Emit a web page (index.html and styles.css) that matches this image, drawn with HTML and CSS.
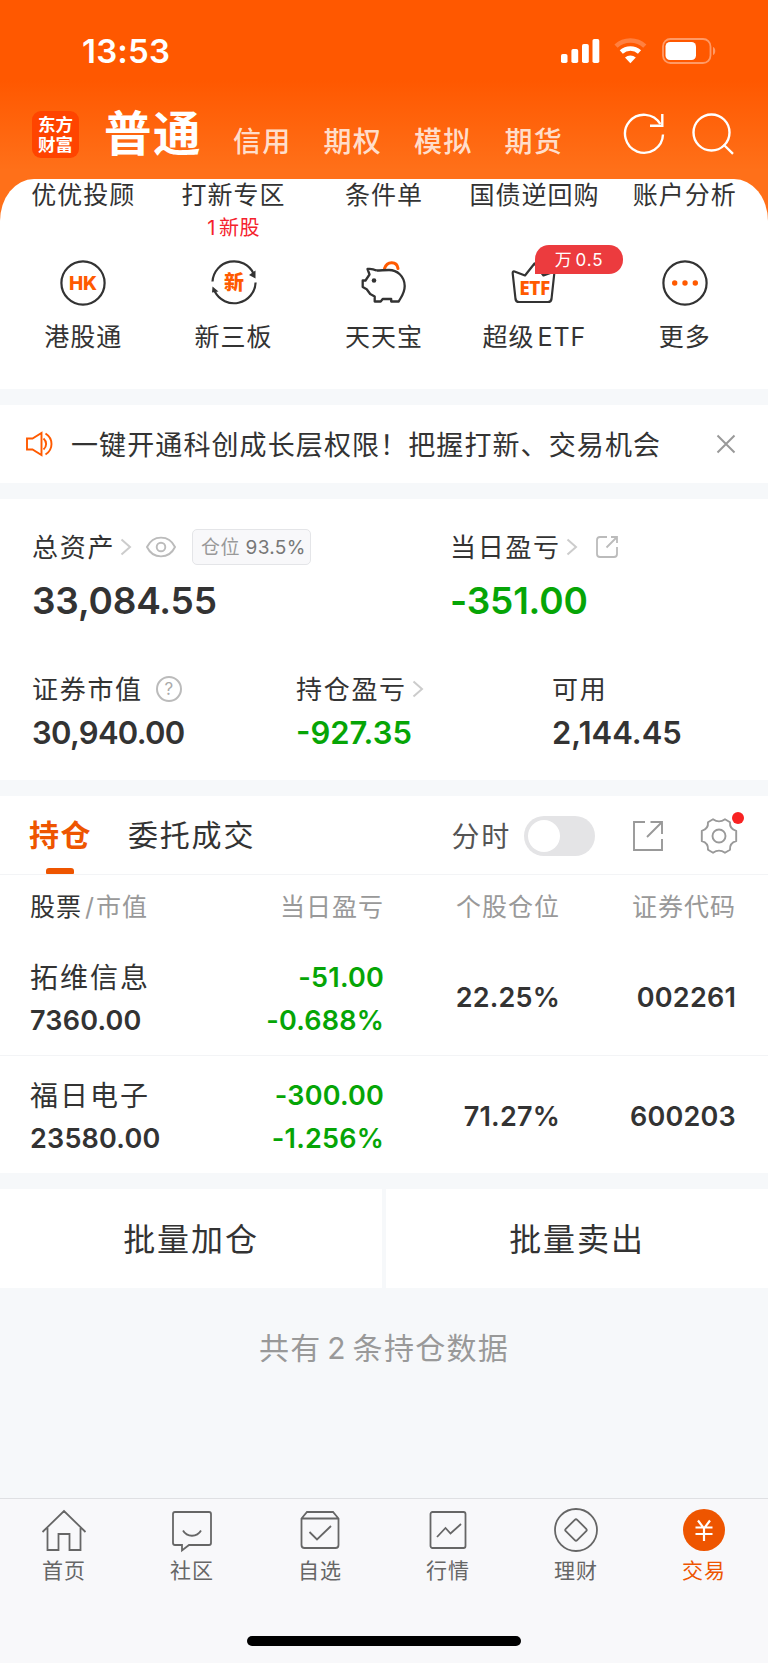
FILE: index.html
```html
<!DOCTYPE html>
<html lang="zh-CN">
  <head>
    <meta charset="UTF-8" />
    <meta name="viewport" content="width=device-width, initial-scale=1.0" />
    <title>交易</title>
    <link rel="stylesheet" href="styles.css">
  </head>
  <body>
    <header>
      <div class="status">
        <span class="time">13:53</span>
        <svg class="signals" width="156" height="28" viewBox="0 0 156 28">
          <g fill="#fff">
            <rect x="0" y="17" width="6.5" height="9" rx="1.8" />
            <rect x="10.4" y="12" width="6.8" height="14" rx="1.8" />
            <rect x="21" y="7" width="6.8" height="19" rx="1.8" />
            <rect x="31.5" y="2" width="6.8" height="24" rx="1.8" />
          </g>
          <g fill="none" stroke="#fff" stroke-width="4.6">
            <path d="M55 9.2A21 21 0 0 1 83.800 9.200" stroke="#ff8040" />
            <path d="M60.300 15A13.500 13.500 0 0 1 78.500 15" />
          </g>
          <path d="M64 20.500a8 8 0 0 1 10.800 0l-5.400 5.700z" fill="#fff" />
          <rect x="102" y="2" width="47.500" height="24" rx="7.500" fill="none" stroke="#ff9a66" stroke-width="1.800" />
          <rect x="104.500" y="5" width="30.500" height="18" rx="4.500" fill="#fff" />
          <path d="M152 10c3 1 3 7 0 8z" fill="#ff9a66" />
        </svg>
      </div>
      <nav class="top-nav">
        <div class="logo">东方<br />财富</div>
        <h1>普通</h1>
        <a>信用</a>
        <a>期权</a>
        <a>模拟</a>
        <a>期货</a>
        <svg class="refresh" width="44" height="44" viewBox="0 0 44 44" fill="none" stroke="#fff" stroke-width="2.400">
          <path d="M41 22.500A19 19 0 1 1 38.300 12" />
          <path d="M40.300 2v11.800H28" />
        </svg>
        <svg class="search" width="44" height="44" viewBox="0 0 44 44" fill="none" stroke="#fff" stroke-width="2.400">
          <circle cx="20.500" cy="20.500" r="18" />
          <path d="M32.500 32.500l9.500 9.300" />
        </svg>
      </nav>
    </header>

    <section class="quick">
      <div class="quick-row">
        <span>优优投顾</span>
        <span>打新专区<em>1 新股</em></span>
        <span>条件单</span>
        <span>国债逆回购</span>
        <span>账户分析</span>
      </div>
      <div class="quick-row icons">
        <div class="item">
          <svg width="50" height="50" viewBox="0 0 50 50">
            <circle cx="25" cy="25" r="21.600" fill="none" stroke="#333" stroke-width="2.200" />
            <text x="25" y="32" class="icon-hk">HK</text>
          </svg>
          港股通
        </div>
        <div class="item">
          <svg width="50" height="50" viewBox="0 0 50 50">
            <g fill="none" stroke="#333" stroke-width="2.200">
              <path d="M3.500 23.500A21.600 21.600 0 0 1 44.500 15.500" />
              <path d="M46.600 24.500A21.600 21.600 0 0 1 5.800 33.500" />
            </g>
            <path d="M46.500 12.500v8l-6.500-3.500zM3.500 28.500l6 5-6.500 1z" fill="#333" />
            <text x="25" y="32" class="icon-xin">新</text>
          </svg>
          新三板
        </div>
        <div class="item">
          <svg width="50" height="50" viewBox="0 0 50 50" fill="none" stroke-width="2.300" stroke-linejoin="round">
            <path d="M25.500 10.500c2.500-8 12.500-7.500 13.500 0" stroke="#ff5a00" stroke-width="3" stroke-linecap="round" />
            <path d="M17.500 12.500c-3-1.500-7-1.800-9-1.500l2 5.500-4 6H3.700v6.500l4 2.200 3.500 4.800 4.500 2.500v5h6l2-2.500h8.500v2.500h7.500c2-4 6-8 6-15.500C45.500 18 38 12 30 12c-5 0-8 .5-12.500.5" stroke="#333" />
            <circle cx="15" cy="22.500" r="2.300" fill="#333" />
          </svg>
          天天宝
        </div>
        <div class="item">
          <svg width="50" height="50" viewBox="0 0 50 50">
            <path d="M5.500 13.500l10.500 4 9.500-12 9 12 11-4-3 27.500c-.3 2-1.500 3-3.500 3h-29c-2 0-3.200-1-3.500-3l-2.800-25.500c-.1-1.500.5-2.500 1.800-2z" fill="none" stroke="#333" stroke-width="2.200" stroke-linejoin="round" />
            <text x="25.500" y="36.500" class="icon-etf">ETF</text>
          </svg>
          超级 ETF
          <b class="badge">万 0.5</b>
        </div>
        <div class="item">
          <svg width="50" height="50" viewBox="0 0 50 50">
            <circle cx="25" cy="25" r="21.600" fill="none" stroke="#333" stroke-width="2.200" />
            <g fill="#ff5a00">
              <circle cx="14.700" cy="25" r="2.700" />
              <circle cx="25" cy="25" r="2.700" />
              <circle cx="35.300" cy="25" r="2.700" />
            </g>
          </svg>
          更多
        </div>
      </div>
    </section>

    <section class="notice">
      <svg width="30" height="26" viewBox="0 0 30 26" fill="none" stroke="#ff5a00" stroke-width="1.900">
        <path d="M2 7.500h5.500L16.500 2v22l-9-5.500H2z" />
        <path d="M18.500 7.500c3.500 3 3.500 8 0 11" />
        <path d="M20.500 2.500c8 5 8 16 0 21" />
      </svg>
      <p>一键开通科创成长层权限！把握打新、交易机会</p>
      <svg class="close" width="20" height="20" viewBox="0 0 20 20" fill="none" stroke="#999" stroke-width="2">
        <path d="M1.500 1.500l17 17M18.500 1.500l-17 17" />
      </svg>
    </section>

    <section class="assets">
      <div class="main-row">
        <div class="col">
          <div class="label">
            <span>总资产</span>
            <svg class="arrow" width="12" height="18" viewBox="0 0 12 18"><path d="M1.500 1.500L10 9l-8.500 7.500" /></svg>
            <svg class="eye" width="32" height="22" viewBox="0 0 32 22" fill="none" stroke="#bbb" stroke-width="1.900">
              <path d="M2 11C8 -1.500 24 -1.500 30 11 24 23.500 8 23.500 2 11z" />
              <circle cx="16" cy="11" r="4.300" />
            </svg>
            <b class="tag">仓位 <i>93.5%</i></b>
          </div>
          <strong>33,084.55</strong>
        </div>
        <div class="col">
          <div class="label">
            <span>当日盈亏</span>
            <svg class="arrow" width="12" height="18" viewBox="0 0 12 18"><path d="M1.500 1.500L10 9l-8.500 7.500" /></svg>
            <svg class="share" width="24" height="24" viewBox="0 0 24 24" fill="none" stroke="#bbb" stroke-width="1.800">
              <path d="M12 2H5Q2 2 2 5v14q0 3 3 3h14q3 0 3-3v-7" />
              <path d="M16 2h6v6M22 2L11.500 12.500" />
            </svg>
          </div>
          <strong class="down">-351.00</strong>
        </div>
      </div>
      <div class="sub-row">
        <div class="col">
          <div class="label">
            <span>证券市值</span>
            <b class="help">?</b>
          </div>
          <strong>30,940.00</strong>
        </div>
        <div class="col">
          <div class="label">
            <span>持仓盈亏</span>
            <svg class="arrow" width="12" height="18" viewBox="0 0 12 18"><path d="M1.500 1.500L10 9l-8.500 7.500" /></svg>
          </div>
          <strong class="down">-927.35</strong>
        </div>
        <div class="col">
          <div class="label"><span>可用</span></div>
          <strong>2,144.45</strong>
        </div>
      </div>
    </section>

    <section class="hold">
      <div class="tabs">
        <a class="active">持仓</a>
        <a>委托成交</a>
        <span class="mode">分时</span>
        <span class="switch"></span>
        <svg class="export" width="32" height="32" viewBox="0 0 32 32" fill="none" stroke="#999" stroke-width="1.900">
          <path d="M13 2H2v28h28V19" />
          <path d="M18.500 2H30v12M30 2L15 17" />
        </svg>
        <span class="gear">
          <svg width="38" height="38" viewBox="0 0 38 38" fill="none" stroke="#999" stroke-width="1.900" stroke-linejoin="round">
            <path d="M13 2.300Q19 6.500 25 2.300L30 5.200Q29.500 12 36.200 13.800V24.200Q29.500 26 30 32.800L25 35.700Q19 31.500 13 35.700L8 32.800Q8.500 26 1.800 24.200V13.800Q8.500 12 8 5.200z" />
            <circle cx="19" cy="19" r="6.500" />
          </svg>
          <i class="dot"></i>
        </span>
      </div>
      <div class="row head">
        <span><b>股票</b><i>/</i>市值</span>
        <span>当日盈亏</span>
        <span>个股仓位</span>
        <span>证券代码</span>
      </div>
      <div class="row">
        <span><b>拓维信息</b>7360.00</span>
        <span class="down">-51.00<br />-0.688%</span>
        <span>22.25%</span>
        <span>002261</span>
      </div>
      <div class="row">
        <span><b>福日电子</b>23580.00</span>
        <span class="down">-300.00<br />-1.256%</span>
        <span>71.27%</span>
        <span>600203</span>
      </div>
    </section>

    <section class="batch">
      <a>批量加仓</a>
      <a>批量卖出</a>
    </section>
    <p class="total">共有 2 条持仓数据</p>

    <footer>
      <div class="tabbar">
        <a>
          <svg width="46" height="46" viewBox="0 0 46 46">
            <path d="M1.500 25L23 4l21.500 21M6.500 21v22H17.500V27h11v16H39.500V21" />
          </svg>
          首页
        </a>
        <a>
          <svg width="46" height="46" viewBox="0 0 46 46">
            <path d="M6 5h34q2 0 2 2v29q0 2-2 2H20l-7 5.500V38H6q-2 0-2-2V7q0-2 2-2z" />
            <path d="M14 23.500c4 7 14 7 18 0" />
          </svg>
          社区
        </a>
        <a>
          <svg width="46" height="46" viewBox="0 0 46 46">
            <path d="M10 5h26l5.500 6.500V38q0 3-3 3h-31q-3 0-3-3V11.500zM4.500 11.500h37" />
            <path d="M12.500 25l7.500 7.500L34 19" />
          </svg>
          自选
        </a>
        <a>
          <svg width="46" height="46" viewBox="0 0 46 46">
            <rect x="5.500" y="5" width="35" height="36" rx="2" />
            <path d="M12 30l8.500-9 5 5.500L36 17" />
          </svg>
          行情
        </a>
        <a>
          <svg width="46" height="46" viewBox="0 0 46 46">
            <circle cx="23" cy="23" r="21" />
            <path d="M21.800 12.800q1.200-1.200 2.400 0l9 9q1.200 1.200 0 2.400l-9 9q-1.200 1.200-2.400 0l-9-9q-1.200-1.200 0-2.400z" />
          </svg>
          理财
        </a>
        <a class="on">
          <svg width="46" height="46" viewBox="0 0 46 46">
            <circle class="coin" cx="23" cy="23" r="21" />
            <path class="yen" d="M17 13.500l6 8 6-8M23 21.500V34M14.500 20.500h17M14.500 27h17" />
          </svg>
          交易
        </a>
      </div>
      <div class="home-bar"></div>
    </footer>
  </body>
</html>
```
FILE: styles.css
```css
* {
  box-sizing: border-box;
}
body {
  display: flex;
  flex-direction: column;
  height: 1663px;
  margin: 0;
  background: #f6f8fa;
  color: #333;
  font-family: Inter, "Noto Sans CJK SC", sans-serif;
  font-size: 25px;
  letter-spacing: 1px;
}
h1,
p {
  margin: 0;
}
i,
em {
  font-style: normal;
}
svg {
  flex: none;
  display: block;
}
section {
  flex: none;
  background: #fff;
}

/* 顶部 */
header {
  flex: none;
  height: 225px;
  background: linear-gradient(#ff5800 80px, #ff7019 170px);
}
.status {
  display: flex;
  justify-content: space-between;
  align-items: center;
  height: 103px;
  padding: 0 46px 0 82px;
  color: #fff;
}
.time {
  padding-bottom: 1px;
  font-size: 33px;
  font-weight: 600;
  letter-spacing: 0.200px;
}
.signals {
  margin: 0 5px 2px 0;
}
.top-nav {
  display: flex;
  align-items: center;
  height: 62px;
  padding-left: 32px;
  color: #fff;
}
.logo {
  width: 47px;
  height: 47px;
  padding-top: 4px;
  border-radius: 9px;
  background: #ff4400;
  font-size: 17.500px;
  font-weight: 700;
  line-height: 20px;
  letter-spacing: 0;
  text-align: center;
}
.top-nav h1 {
  width: 154px;
  padding: 0 0 7px 25px;
  font-size: 47.500px;
  font-weight: 600;
  letter-spacing: 1.500px;
}
.top-nav a {
  width: 90.500px;
  padding-top: 12px;
  color: rgba(255, 255, 255, 0.8);
  font-size: 28px;
  font-weight: 500;
  letter-spacing: 1.300px;
}
.refresh {
  margin-left: 27px;
}
.search {
  margin-left: 25px;
}

/* 快捷入口 */
.quick {
  height: 210px;
  margin-top: -46px;
  padding: 0 8px;
  border-radius: 34px 34px 0 0 / 42px 42px 0 0;
}
.quick-row {
  display: grid;
  grid-template-columns: repeat(5, 1fr);
  height: 78px;
  text-align: center;
  white-space: nowrap;
  line-height: 33px;
  word-spacing: -5px;
}
.quick-row em {
  display: block;
  color: #f5222d;
  font-size: 20px;
  line-height: 32px;
  letter-spacing: 0.500px;
  word-spacing: -3px;
}
.item {
  position: relative;
}
.item svg {
  margin: 1px auto 13px;
}
.icons text {
  fill: #ff5a00;
  font-weight: 800;
  letter-spacing: 0;
  text-anchor: middle;
}
.icon-hk {
  font-size: 19px;
}
.icon-xin {
  font-size: 20px;
}
.icons .icon-etf {
  font-family: "Noto Sans", sans-serif;
  font-size: 19px;
  letter-spacing: -0.500px;
}
.badge {
  position: absolute;
  top: -12px;
  left: 76px;
  width: 88px;
  height: 29px;
  border-radius: 14px 14px 14px 0;
  background: #ec3b3e;
  color: #fff;
  font-size: 17px;
  font-weight: 400;
  line-height: 30px;
  word-spacing: -3px;
}

/* 公告 */
.notice {
  display: flex;
  align-items: center;
  height: 78px;
  margin: 16px 0;
  padding: 0 32px 0 25px;
  font-size: 27px;
  letter-spacing: 1.100px;
}
.notice p {
  flex: 1;
  padding: 0 0 2px 16px;
  white-space: nowrap;
}

/* 资产 */
.assets {
  height: 281px;
  padding: 28px 32px 0;
}
.assets .label {
  display: flex;
  align-items: center;
  height: 40px;
  font-size: 26px;
  white-space: nowrap;
}
.label span {
  padding-bottom: 4px;
  letter-spacing: 1.700px;
}
.main-row {
  display: grid;
  grid-template-columns: 418px 1fr;
  height: 142px;
}
.sub-row {
  display: grid;
  grid-template-columns: 264px 256px 1fr;
}
.assets strong {
  display: block;
  font-weight: 600;
}
.main-row strong {
  font-size: 37px;
  line-height: 68px;
  letter-spacing: -0.200px;
}
.sub-row strong {
  font-size: 31px;
  line-height: 48px;
  letter-spacing: 0;
}
.sub-row .col:first-child strong {
  letter-spacing: -0.700px;
}
.down,
.assets .down {
  color: #06a506;
}
.arrow {
  margin-left: 5px;
  fill: none;
  stroke: #ccc;
  stroke-width: 2;
}
.eye {
  margin-left: 13px;
}
.share {
  margin-left: 17px;
}
.tag {
  height: 36px;
  margin-left: 15px;
  padding: 0 4px 0 8px;
  border: 1px solid #e4e5e8;
  border-radius: 5px;
  background: #f8f8fa;
  color: #999;
  font-size: 19px;
  font-weight: 400;
  line-height: 36px;
  letter-spacing: 0.350px;
}
.tag i {
  color: #777;
}
.help {
  width: 26px;
  height: 26px;
  margin-left: 13px;
  border: 2px solid #bbb;
  border-radius: 50%;
  color: #aaa;
  font-size: 17px;
  font-weight: 400;
  line-height: 23px;
  letter-spacing: 0;
  text-align: center;
}

/* 持仓列表 */
.hold {
  height: 377px;
  margin: 16px 0;
}
.tabs {
  display: flex;
  align-items: center;
  height: 79px;
  padding: 1px 30px 0 29px;
  border-bottom: 1px solid #f3f4f6;
  font-size: 30px;
  letter-spacing: 1.800px;
}
.tabs a {
  margin-right: 36px;
  line-height: 77px;
}
.tabs .active {
  position: relative;
  color: #ee5500;
  font-weight: 700;
  letter-spacing: 1.500px;
}
.active::after {
  content: "";
  position: absolute;
  left: 17px;
  bottom: 0;
  width: 28px;
  height: 6px;
  border-radius: 3px 3px 1px 1px;
  background: #ee5500;
}
.mode {
  margin-left: auto;
  padding-bottom: 2px;
  color: #555;
  font-size: 28px;
}
.switch {
  width: 71px;
  height: 40px;
  margin-left: 13px;
  padding: 4px;
  border-radius: 20px;
  background: #e4e4e6;
}
.switch::before {
  content: "";
  display: block;
  width: 32px;
  height: 32px;
  border-radius: 50%;
  background: #fff;
}
.export {
  margin-left: 37px;
}
.gear {
  position: relative;
  margin-left: 36px;
}
.dot {
  position: absolute;
  top: -5px;
  right: -6px;
  width: 12px;
  height: 12px;
  border-radius: 50%;
  background: #f82222;
}
.row {
  display: grid;
  grid-template-columns: 180px 174px 176px 1fr;
  align-items: center;
  height: 118px;
  padding: 2px 32px 0 30px;
  border-bottom: 1px solid #f3f4f6;
  font-size: 27px;
  font-weight: 600;
  line-height: 43px;
  letter-spacing: 0.200px;
  text-align: right;
}
.row:last-child {
  border: none;
}
.row span:first-child {
  text-align: left;
}
.row .down {
  padding-top: 2px;
}
.row b {
  display: block;
  padding-top: 3px;
  font-size: 28px;
  font-weight: 400;
  line-height: 42px;
  letter-spacing: 2px;
}
.head {
  height: 63px;
  border: none;
  color: #999;
  font-size: 25px;
  font-weight: 400;
  letter-spacing: 1px;
}
.head b {
  display: inline;
  color: #333;
  font-size: 25px;
  letter-spacing: 1px;
}
.head i {
  padding: 0 1px 0 3px;
}

/* 批量操作 */
.batch {
  display: grid;
  grid-template-columns: 1fr 1fr;
  gap: 4px;
  height: 99px;
  background: none;
}
.batch a {
  padding-top: 2px;
  background: #fff;
  font-size: 32px;
  line-height: 97px;
  letter-spacing: 1.900px;
  text-align: center;
}
.total {
  padding-top: 38px;
  color: #999;
  font-size: 30px;
  line-height: 44px;
  letter-spacing: 1.300px;
  text-align: center;
  word-spacing: -4px;
}

/* 底部导航 */
footer {
  height: 165px;
  margin-top: auto;
  border-top: 1px solid #dfe0e3;
  background: #f8f8fa;
}
.tabbar {
  display: grid;
  grid-template-columns: repeat(6, 1fr);
  height: 137px;
  padding-top: 8px;
  color: #666;
  font-size: 21px;
  line-height: 34px;
  text-align: center;
}
.tabbar svg {
  margin: 0 auto 1px;
  fill: none;
  stroke: #666;
  stroke-width: 1.800;
}
.tabbar .on {
  color: #ee5500;
}
.tabbar .coin {
  fill: #ee5500;
  stroke: none;
}
.tabbar .yen {
  stroke: #fff;
  stroke-width: 2.200;
}
.home-bar {
  width: 274px;
  height: 10px;
  margin: 0 auto;
  border-radius: 5px;
  background: #000;
}
```
